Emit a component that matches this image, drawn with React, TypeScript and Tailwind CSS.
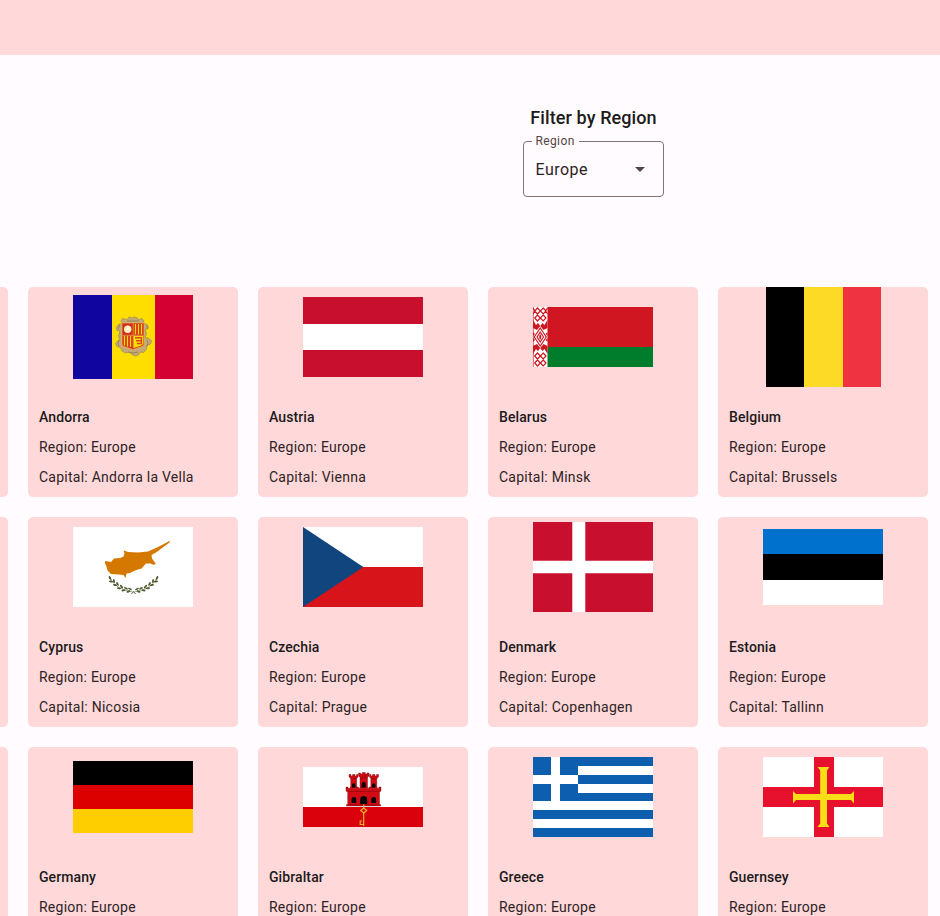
import type { ReactNode } from "react";

type Country = { name: string; capital: string; flag: ReactNode };

function Flag({ w = 120, h, children }: { w?: number; h: number; children: ReactNode }) {
  return (
    <svg width={w} height={h} viewBox={`0 0 ${w} ${h}`} className="block">
      {children}
    </svg>
  );
}

const Andorra = (
  <Flag h={84}>
    <rect width="39" height="84" fill="#10069f" />
    <rect x="39" width="43" height="84" fill="#fedd00" />
    <rect x="82" width="38" height="84" fill="#d50032" />
    <path
      d="M48 26l1.500-2.500 4 1 2-1 .5-1.500 3 1 2.500-1 3 1 .5 2 4-1.500 2 2.500-1 2.500 3.500.5 2 3-1 2-2.500.5 1.500 4-1.500 4.500 3 0 3.500 2.500-1 3.500-3.500 1.500-.5 3.500-3 3.500-3.500-.5-1.500 3-3.500 1-3-1.500-2.500-2.500-4 1-3.500-2-1.500-3.500-3.500-1-1.500-3 2.500-3 2-.5-1.500-4 1.500-5-3-.5-.5-3 2.500-3.500 4 0z"
      fill="#c6aa76"
      stroke="#a58d5c"
      strokeWidth=".8"
      strokeLinejoin="round"
    />
    <path d="M49 28h22v21q0 2-2 2.500l-9 3-9-3q-2-.5-2-2.500z" fill="#d52b1e" stroke="#e9b54c" strokeWidth=".7" />
    <circle cx="54.700" cy="34.300" r="3.700" fill="#fff3c4" />
    <path d="M62.500 29v10.500M65.500 29v10.500M68.500 29v10.500M51.500 41v9.500M54.500 41v10.500M57.500 41v11" stroke="#fedd00" strokeWidth="1.300" />
    <path d="M60.500 41h9.800v7.500q0 2-9.800 4.500z" fill="#fedd00" />
    <path d="M62 42.800h6.500v3H63M64 48.500h4.500v-2" stroke="#d5482a" strokeWidth="1.400" fill="none" />
    <path d="M49.500 40.300h21M60.200 28.500v24" stroke="#e6b34a" strokeWidth=".7" />
    <path d="M45 34q2-2 1-4M75 34q-2-2-1-4M46 45q-2 3 0 6M74 45q2 3 0 6M55 57q5 2 10 0M54 26h12" stroke="#8d7a56" strokeWidth=".8" fill="none" />
  </Flag>
);

const Austria = (
  <Flag h={80}>
    <rect width="120" height="80" fill="#c8102e" />
    <rect y="27" width="120" height="26" fill="#fff" />
  </Flag>
);

const Belarus = (
  <Flag h={60}>
    <rect width="120" height="40" fill="#cf1621" />
    <rect y="40" width="120" height="20" fill="#007d2c" />
    <rect width="14.500" height="60" fill="#fff" />
    <g fill="none" stroke="#ce1720" strokeWidth="1.200">
      <path d="M0 1l2 3-2 3M4.500 1L7.300 4 4.500 7 1.700 4zM10.200 1L13 4l-2.800 3-2.900-3zM14.500 1l-2 3 2 3M4.500 8l2.800 3-2.800 3-2.800-3zM10.200 8l2.800 3-2.800 3-2.900-3z" />
      <path d="M7.250 21l6 9-6 9-6-9zM7.250 25l3.200 5-3.200 5-3.200-5z" />
      <path d="M4.500 46l2.800 3-2.800 3-2.800-3zM10.200 46l2.800 3-2.800 3-2.900-3zM4.500 53l2.800 3-2.800 3-2.800-3zM10.200 53l2.800 3-2.800 3-2.900-3z" />
    </g>
    <path
      d="M0 13l3 5 2-2 2.250 3L9.500 16l2 2 3-5v8l-4 2-3.250-4L4 23l-4-2zM0 47l3-5 2 2 2.250-3 2.250 3 2-2 3 5v-8l-4-2-3.250 4L4 37l-4 2zM6.200 29l1-2 1 2v2l-1 2-1-2z"
      fill="#ce1720"
    />
    <path d="M0 25l2 2-2 2zM0 31l2 2-2 2zM14.500 25l-2 2 2 2zM14.500 31l-2 2 2 2z" fill="#ce1720" />
    <path d="M.5 0v60" stroke="#ce1720" strokeWidth=".6" />
  </Flag>
);

const Belgium = (
  <Flag w={115} h={100}>
    <rect width="38" height="100" fill="#000" />
    <rect x="38" width="39" height="100" fill="#fdda25" />
    <rect x="77" width="38" height="100" fill="#ef3340" />
  </Flag>
);

const leaves = [
  [37, 51, 60], [38, 54.5, 10], [41, 54, 80], [42, 58, 15], [44.5, 57, 60], [46, 61.2, 5],
  [48.5, 59.6, 50], [50.5, 63.4, -10], [53, 61.3, 30], [55.500, 64.500, -20], [57, 62, 25],
];
const Cyprus = (
  <Flag h={80}>
    <rect width="120" height="80" fill="#fff" />
    <path
      d="M97 13.700L96.500 15.500 83 25.500 78.500 28 79 31.500 82.700 36.500 81 38 77.500 36.500 73 36.500 68.500 41.500 62 43.500 57 46 53.500 46.500 52.500 51 50.500 48 46 47.500 38 47 34.500 43.500 33.500 39.500 31.700 35.500 32.500 34 38 35 41 31.500 47 31 50.500 29.500 51.500 26.500 50.500 23.300 55 25 65 25.500 75 24.500 85 20z"
      fill="#d57800"
    />
    {[0, 1].map((side) => (
      <g key={side} transform={side ? "translate(121 0) scale(-1 1)" : undefined}>
        <path d="M37 51Q43 63 60 65" fill="none" stroke="#4e5b31" strokeWidth=".5" />
        {leaves.map(([x, y, r], i) => (
          <ellipse key={i} cx={x} cy={y} rx="2.100" ry=".95" fill="#4e5b31" transform={`rotate(${r} ${x} ${y})`} />
        ))}
      </g>
    ))}
    <path d="M58.500 67L60.500 64.500 62.500 67" stroke="#4e5b31" strokeWidth=".9" fill="none" />
  </Flag>
);

const Czechia = (
  <Flag h={80}>
    <rect width="120" height="40" fill="#fff" />
    <rect y="40" width="120" height="40" fill="#d7141a" />
    <path d="M0 0L60.300 40 0 80z" fill="#11457e" />
  </Flag>
);

const Denmark = (
  <Flag h={90}>
    <rect width="120" height="90" fill="#c8102e" />
    <path d="M39.300 0h13v90h-13zM0 38.700h120v12.600H0z" fill="#fff" />
  </Flag>
);

const Estonia = (
  <Flag h={76}>
    <rect width="120" height="25" fill="#0072ce" />
    <rect y="25" width="120" height="26" fill="#000" />
    <rect y="51" width="120" height="25" fill="#fff" />
  </Flag>
);

const Germany = (
  <Flag h={72}>
    <rect width="120" height="24" fill="#000" />
    <rect y="24" width="120" height="24" fill="#d00" />
    <rect y="48" width="120" height="24" fill="#ffce00" />
  </Flag>
);

const Gibraltar = (
  <Flag h={60}>
    <rect width="120" height="40" fill="#fff" />
    <rect y="40" width="120" height="20" fill="#da000c" />
    <g fill="#d10a14" stroke="#6d0a0e" strokeWidth=".4">
      <path d="M46 7.500h2v1.500h1.500V7.500H52V9h1.500V7.500h1.500V10l-1.300 1.500V21h-6V11.500L46 10z" />
      <path d="M55.500 6h2v1h1.800V5.500h3V7H64V6h2v3l-1.500 1.500V21h-7.500V10.500L55.500 9z" />
      <path d="M66.500 7.500H68V9h1.500V7.500H72V9h1.500V7.500h2V10l-1.700 1.500V21h-6V11.500L66.500 10z" />
      <path d="M43 20h2v1.300h2.500V20H50v1.300h3V20h2.500v1.300h3V20H63v1.300h3V20h2.500v1.300h3V20H74v1.300h2V20h2v4l-1.500 1v12.500h1.200V39H43.500v-1.500h1.200V25L43 24z" />
    </g>
    <path d="M48 11.500h5.500M57.200 11h7.300M68 11.500h5.500M45 24.500h31.500M45 37.800h31.500M59.500 8v2M62 8v2" stroke="#7c0a0e" strokeWidth=".6" />
    <path
      d="M49 20.500V18a1.700 1.700 0 013.400 0v2.500zM58.700 20.500V17a2 2 0 014 0v3.500zM69 20.500V18a1.700 1.700 0 013.400 0v2.500zM48.500 36v-3.500a2.400 2.400 0 014.800 0V36zM68.300 36v-3.500a2.400 2.400 0 014.800 0V36zM57.200 37v-4.500a3.500 3.500 0 017 0V37z"
      fill="#080203"
    />
    <g fill="none" stroke="#e9b32a" strokeWidth="1.200">
      <path d="M60.700 37.500V41M60.700 45v14M60.700 57.500h-3.500V54h2" />
      <path d="M60.700 41l3 2.500-3 2.500-3-2.500z" />
    </g>
  </Flag>
);

const Greece = (
  <Flag h={80}>
    <rect width="120" height="80" fill="#fff" />
    <path d="M0 0h120v9H0zM0 18h120v9H0zM0 36h120v8H0zM0 53h120v9H0zM0 71h120v9H0zM0 0h45v44H0z" fill="#0d5eaf" />
    <path d="M18 0h9v44h-9zM0 18h45v9H0z" fill="#fff" />
  </Flag>
);

const Guernsey = (
  <Flag h={80}>
    <rect width="120" height="80" fill="#fff" />
    <path d="M51 0h20v80H51zM0 30h120v20H0z" fill="#e8112d" />
    <path
      d="M54.500 10h12L64 13.500V37h24l3-3v12.500L88 43H64v23.500l2.500 3.500h-12l2.700-3.500V43H33l-3 3.500V34l3 3h24.200V13.500z"
      fill="#f9dd16"
    />
  </Flag>
);

const countries: Country[] = [
  { name: "Andorra", capital: "Andorra la Vella", flag: Andorra },
  { name: "Austria", capital: "Vienna", flag: Austria },
  { name: "Belarus", capital: "Minsk", flag: Belarus },
  { name: "Belgium", capital: "Brussels", flag: Belgium },
  { name: "Cyprus", capital: "Nicosia", flag: Cyprus },
  { name: "Czechia", capital: "Prague", flag: Czechia },
  { name: "Denmark", capital: "Copenhagen", flag: Denmark },
  { name: "Estonia", capital: "Tallinn", flag: Estonia },
  { name: "Germany", capital: "", flag: Germany },
  { name: "Gibraltar", capital: "", flag: Gibraltar },
  { name: "Greece", capital: "", flag: Greece },
  { name: "Guernsey", capital: "", flag: Guernsey },
];

function Card({ name, capital, flag }: Country) {
  return (
    <article className="h-[210px] rounded-[5px] bg-[#ffd9da] text-sm leading-5 text-[#2e2324]">
      <div className="flex h-[100px] items-center justify-center">{flag}</div>
      <div className="flex flex-col gap-[10px] pt-5 pl-[10.600px]">
        <h2 className="font-medium tracking-[0.1px] text-[#201a1a]">{name}</h2>
        <p className="tracking-[0.25px]">Region: Europe</p>
        {capital && <p className="tracking-[0.25px]">Capital: {capital}</p>}
      </div>
    </article>
  );
}

function EdgeCard() {
  return <div className="h-[210px] rounded-r-[5px] bg-[#ffd9da]" />;
}

export default function App() {
  const rows = [countries.slice(0, 4), countries.slice(4, 8), countries.slice(8, 12)];
  return (
    <div className="h-[916px] w-[940px] overflow-hidden bg-[#fffbff] font-['Roboto',sans-serif] text-[#201a1a]">
      <header className="h-[55px] bg-[#ffd9da]" />
      <section className="flex h-[232px] flex-col pt-[51px] pl-[523px]">
        <h1 className="w-[141px] text-center text-lg leading-6 font-medium tracking-[0.1px] whitespace-nowrap">
          Filter by Region
        </h1>
        <div className="relative mt-[11px] flex h-14 w-[141px] items-center justify-between rounded-[4px] border border-[#857374] pr-[18px] pl-[11.500px]">
          <span className="absolute -top-[9px] left-2 bg-[#fffbff] pr-1 pl-[3.400px] text-xs leading-4 tracking-[0.4px] text-[#524344]">
            Region
          </span>
          <span className="pt-[2px] text-base leading-6 tracking-[0.45px] text-[#2e2324]">Europe</span>
          <svg width="10" height="5" viewBox="0 0 10 5">
            <path d="M0 0h10L5 5z" fill="#524344" />
          </svg>
        </div>
      </section>
      <main className="flex flex-col gap-5">
        {rows.map((row, i) => (
          <div key={i} className="grid grid-cols-[8.400px_repeat(4,210px)] gap-5">
            <EdgeCard />
            {row.map((c) => (
              <Card key={c.name} {...c} />
            ))}
          </div>
        ))}
      </main>
    </div>
  );
}
